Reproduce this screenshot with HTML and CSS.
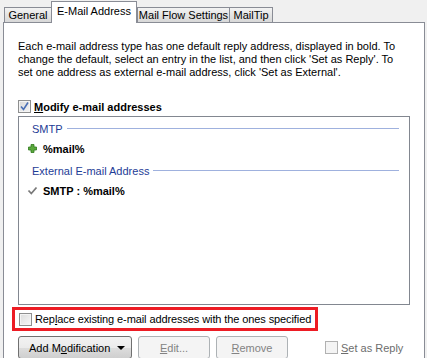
FILE: index.html
```html
<!DOCTYPE html>
<html lang="en">
<head>
    <meta charset="UTF-8">
    <title>E-Mail Address</title>
    <link rel="stylesheet" href="styles.css">
</head>
<body>
    <div class="tabs">
        <span class="tab general">General</span>
        <span class="tab selected">E-Mail Address</span>
        <span class="tab flow">Mail Flow Settings</span>
        <span class="tab tip">MailTip</span>
    </div>
    <div class="panel">
        <p class="intro">Each e-mail address type has one default reply address, displayed in bold. To change the default, select an entry in the list, and then click 'Set as Reply'. To set one address as external e-mail address, click 'Set as External'.</p>

        <label class="check-row modify">
            <span class="box checked">
                <svg width="9" height="9" viewBox="0 0 9 9"><path d="M1 4.5 L3.5 7.5 L8 0.5" fill="none" stroke="#4a6fb5" stroke-width="1.6"/></svg>
            </span>
            <b><u>M</u>odify e-mail addresses</b>
        </label>

        <div class="listbox">
            <div class="group"><span>SMTP</span><i class="rule"></i></div>
            <div class="item">
                <svg class="icon" width="9" height="9" viewBox="0 0 9 9">
                    <path d="M3 0.5h3v2.5h2.5v3H6v2.5H3V6H0.5V3H3z" fill="#5aa83c" stroke="#2f7a1c" stroke-width="0.8"/>
                </svg>
                <b>%mail%</b>
            </div>
            <div class="group"><span>External E-mail Address</span><i class="rule"></i></div>
            <div class="item">
                <svg class="icon" width="10" height="9" viewBox="0 0 10 9">
                    <path d="M1 4.5 L3.8 7.5 L9 1.5" fill="none" stroke="#7a7a7a" stroke-width="1.8"/>
                </svg>
                <b>SMTP : %mail%</b>
            </div>
        </div>

        <label class="check-row replace">
            <span class="box"></span>
            <span>Rep<u>l</u>ace existing e-mail addresses with the ones specified</span>
        </label>

        <div class="actions">
            <button class="btn add"><span>Add M<u>o</u>dification</span><span class="caret"></span></button>
            <button class="btn off"><span><u>E</u>dit...</span></button>
            <button class="btn off"><span><u>R</u>emove</span></button>
            <label class="check-row reply">
                <span class="box"></span>
                <span><u>S</u>et as Reply</span>
            </label>
        </div>
    </div>
</body>
</html>
```

FILE: styles.css
```css
body {
    margin: 0;
    height: 358px;
    background: #f0f0f0;
    font-family: "Liberation Sans", Arial, sans-serif;
    font-size: 11px;
    color: #000;
    overflow: hidden;
}

u {
    text-decoration: underline;
    text-underline-offset: 1px;
}

/* tab strip */
.tabs {
    display: flex;
    align-items: flex-end;
    height: 22px;
    padding-left: 4px;
    position: relative;
    z-index: 1;
}

.tab {
    box-sizing: border-box;
    height: 15px;
    line-height: 15px;
    text-align: center;
    border: 1px solid #898c95;
    border-bottom: none;
    background: linear-gradient(#f3f3f3, #e4e4e4 50%, #d8d8d8);
    white-space: nowrap;
}

.general { width: 48px; }
.flow { width: 93px; }
.tip { width: 44px; margin-left: -1px; }

.tab.selected {
    width: 86px;
    height: 22px;
    line-height: 19px;
    margin: 0 0 -1px -1px;
    border-color: #898c95;
    background: #fff;
}

/* main panel */
.panel {
    box-sizing: border-box;
    margin: 0 2px 0 3px;
    height: 336px;
    border: 1px solid #898c95;
    border-bottom: none;
    background: #fff;
    padding: 0 14px;
    overflow: hidden;
}

.intro {
    margin: 17px 0 21px;
    line-height: 13px;
}

.check-row {
    display: flex;
    align-items: center;
    gap: 3px;
    white-space: nowrap;
}

.box {
    flex-shrink: 0;
    width: 11px;
    height: 11px;
    border: 1px solid #8e8f8f;
    background: linear-gradient(135deg, #dcdcdc, #f8f8f8);
    box-shadow: inset 0 0 0 1px #f4f4f4;
    display: flex;
    align-items: center;
    justify-content: center;
}

.box.checked {
    background: linear-gradient(135deg, #d8d8d8, #f4f4f4);
}

.modify {
    height: 13px;
    margin-bottom: 3px;
}

/* address list */
.listbox {
    width: 367px;
    height: 187px;
    border: 1px solid #828790;
    background: #fff;
    padding: 0 10px 0 13px;
}

.group {
    display: flex;
    align-items: center;
    gap: 4px;
    color: #1e3c96;
    height: 13px;
    margin-top: 5px;
}

.group + .item {
    margin-top: 7px;
}

.item + .group {
    margin-top: 9px;
}

.rule {
    flex: 1;
    border-top: 1px solid #9fb1de;
}

.item {
    display: flex;
    align-items: center;
    gap: 5px;
    height: 13px;
    margin-left: -5px;
}

.icon {
    width: 11px;
    display: block;
}

/* red marker around the replace option */
.replace {
    box-sizing: border-box;
    width: 306px;
    height: 24px;
    margin: 2px 0 0 -6px;
    padding-left: 4px;
    border: 3px solid #ed1c24;
    letter-spacing: -0.1px;
}

/* buttons */
.actions {
    display: flex;
    align-items: flex-start;
    margin-top: 5px;
}

.btn {
    font: inherit;
    box-sizing: border-box;
    height: 23px;
    border-radius: 3px;
    padding: 0;
    margin-right: 6px;
    display: flex;
    align-items: center;
    justify-content: center;
    white-space: nowrap;
}

.btn.add {
    width: 114px;
    border: 1px solid #707070;
    background: linear-gradient(#f2f2f2, #ebebeb 50%, #dddddd 51%, #cfcfcf);
    color: #000;
    justify-content: space-between;
    padding: 0 6px 0 10px;
}

.caret {
    width: 0;
    height: 0;
    border-left: 4px solid transparent;
    border-right: 4px solid transparent;
    border-top: 4px solid #000;
}

.btn.off {
    width: 72px;
    border: 1px solid #adb2b5;
    background: #f4f4f4;
    color: #838383;
}

.reply {
    margin: 5px 0 0 31px;
    color: #6d6d6d;
}

.reply .box {
    border-color: #b1b1b1;
    background: #f4f4f4;
}
```
